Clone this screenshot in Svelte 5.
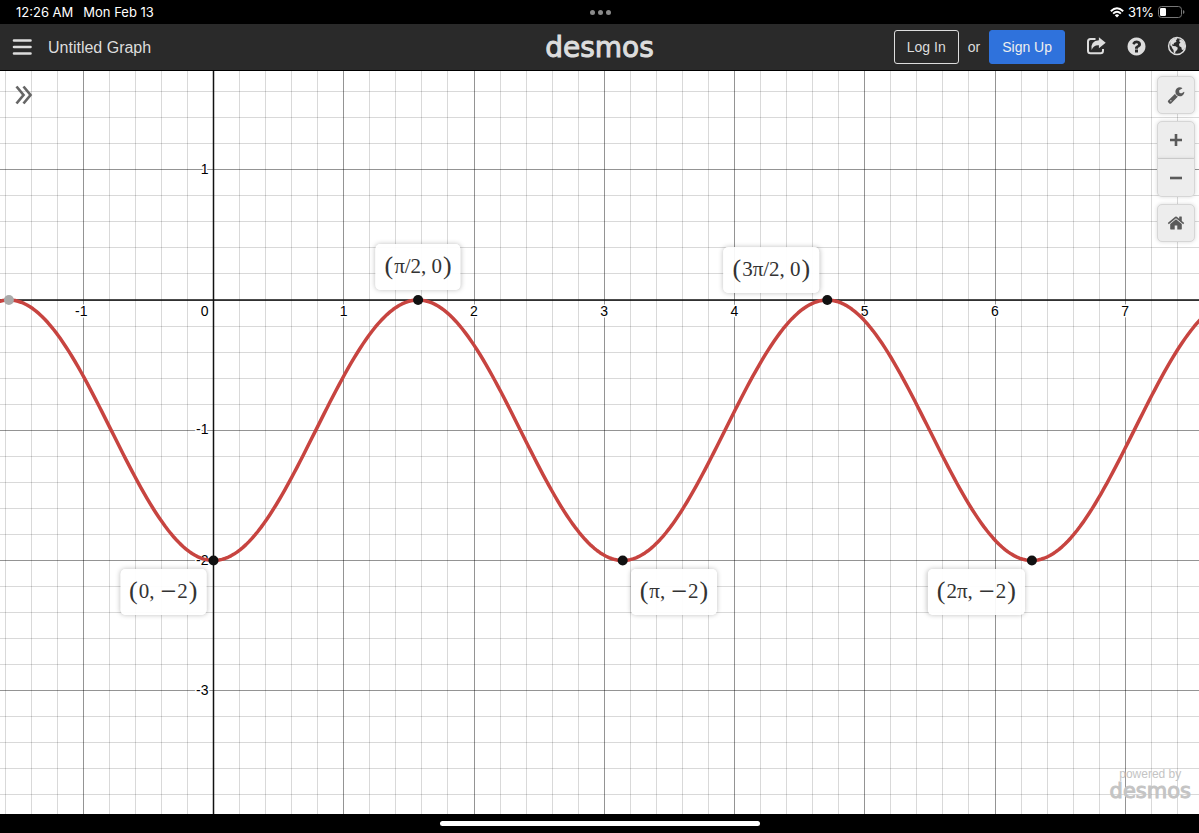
<script>
  const unit = 130.25;
  const origin = { x: 213.5, y: 229 };

  let width = $state(1199);
  let height = $state(743);

  const px = (x) => origin.x + x * unit;
  const py = (y) => origin.y - y * unit;

  const range = (from, to) => Array.from({ length: Math.max(0, to - from + 1) }, (_, i) => from + i);

  const columns = $derived(range(Math.ceil((-origin.x / unit) * 5), Math.floor(((width - origin.x) / unit) * 5)));
  const rows = $derived(range(Math.ceil(((origin.y - height) / unit) * 5), Math.floor((origin.y / unit) * 5)));
  const xLabels = $derived(columns.filter((n) => n % 5 === 0 && n !== 0).map((n) => n / 5));
  const yLabels = $derived(rows.filter((n) => n % 5 === 0 && n !== 0).map((n) => n / 5));

  const curve = $derived(
    'M' +
      range(-2, Math.ceil(width / 3) + 1)
        .map((i) => {
          const sx = i * 3;
          const x = (sx - origin.x) / unit;
          return `${sx} ${py(-Math.cos(2 * x) - 1).toFixed(2)}`;
        })
        .join('L')
  );

  const points = [
    { x: 0, y: -2, first: '0', second: '2', place: 'below-left' },
    { x: Math.PI / 2, y: 0, first: 'π/2', second: '0', place: 'above' },
    { x: Math.PI, y: -2, first: 'π', second: '2', place: 'below-right' },
    { x: (3 * Math.PI) / 2, y: 0, first: '3π/2', second: '0', place: 'above-left' },
    { x: 2 * Math.PI, y: -2, first: '2π', second: '2', place: 'below-left' }
  ];
</script>

<div class="app">
  <div class="status">
    <div class="clock"><span>12:26 AM</span><span>Mon Feb 13</span></div>
    <div class="dots"><i></i><i></i><i></i></div>
    <div class="power">
      <svg width="14" height="11" viewBox="0 0 14 11" aria-hidden="true">
        <g fill="none" stroke="#fff" stroke-width="1.9">
          <path d="M.8 4.3Q7-1.6 13.200 4.300" />
          <path d="M3.100 6.600Q7 3 10.900 6.600" />
        </g>
        <path d="M4.800 8.300Q7 6.400 9.200 8.300L7 10.600Z" fill="#fff" />
      </svg>
      <span>31%</span>
      <svg width="27" height="12" viewBox="0 0 27 12" aria-hidden="true">
        <rect x=".5" y=".5" width="23" height="11" rx="3" fill="none" stroke="#777" />
        <rect x="2" y="2" width="6" height="8" rx="1.300" fill="#fff" />
        <path d="M25 4v4q1.500-.6 1.500-2T25 4" fill="#777" />
      </svg>
    </div>
  </div>

  <header>
    <div class="left">
      <button class="icon" aria-label="Menu">
        <svg width="20" height="16" viewBox="0 0 20 16"><path d="M2 1.500h16.500M2 8h16.500M2 14.500h16.500" stroke="#ddd" stroke-width="2.600" stroke-linecap="round" /></svg>
      </button>
      <span class="title">Untitled Graph</span>
    </div>
    <a class="logo" href="#home">desmos</a>
    <div class="right">
      <button class="btn outline">Log In</button>
      <span class="or">or</span>
      <button class="btn primary">Sign Up</button>
      <div class="icons">
        <button class="icon" aria-label="Share">
          <svg width="20" height="20" viewBox="0 0 20 20">
            <path d="M9.500 3H4.500Q2 3 2 5.500v9.300q0 2.500 2.500 2.500h10q2.500 0 2.500-2.500V13" fill="none" stroke="#ddd" stroke-width="2" />
            <path d="M12.900 1.200L19.700 6.700 12.900 12.200V9.300Q7.500 8.900 5.600 14 4.200 4.800 12.900 4.300Z" fill="#ddd" />
          </svg>
        </button>
        <button class="icon" aria-label="Help">
          <svg width="21" height="21" viewBox="0 0 1792 1792"><path fill="#ddd" d="M1024 1376v-192q0-14-9-23t-23-9h-192q-14 0-23 9t-9 23v192q0 14 9 23t23 9h192q14 0 23-9t9-23zm256-672q0-88-55.500-163t-138.500-116-170-41q-243 0-371 213-15 24 8 42l132 100q7 6 19 6 16 0 25-12 53-68 86-92 34-24 86-24 48 0 85.500 26t37.500 59q0 38-20 61t-68 45q-63 28-115.500 86.500t-52.500 125.500v36q0 14 9 23t23 9h192q14 0 23-9t9-23q0-19 21.500-49.500t54.500-49.500q32-18 49-28.500t46-35 44.500-48 28-60.500 12.500-81zm384 192q0 209-103 385.500t-279.500 279.500-385.500 103-385.500-103-279.500-279.500-103-385.500 103-385.500 279.500-279.500 385.500-103 385.500 103 279.500 279.500 103 385.500z" /></svg>
        </button>
        <button class="icon" aria-label="Language">
          <svg width="20" height="20" viewBox="0 0 20 20">
            <circle cx="10" cy="10" r="8.400" fill="none" stroke="#ddd" stroke-width="1.500" />
            <path fill="#ddd" d="M3.200 5.500Q5.500 2.300 9.600 1.800L10.300 3 8.800 4.200 9.600 5.200 8.300 6.500 6.800 7.100 6.900 8.600 5.400 8.200 4.900 9.300 6.300 10.100 8.600 10.300 10.800 11.800 10.200 13.900 8.700 15.300 7.900 17.500 6.800 16.900 6.500 14 5 12 4.700 10.700 3.200 9.200Z" />
            <path fill="#ddd" d="M12.600 3.200L15.800 4.500 17.800 7.800 18.100 11.500 16.400 14 14.900 13.800 14.300 11.300 12.400 10.300 12 8 13.500 6.600 12.300 5.400Z" />
          </svg>
        </button>
      </div>
    </div>
  </header>

  <main bind:clientWidth={width} bind:clientHeight={height}>
    <svg class="graph" aria-label="Graph">
      {#each columns as n}
        <line x1={Math.floor(px(n / 5)) + 0.5} x2={Math.floor(px(n / 5)) + 0.5} y1="0" y2={height} class={n % 5 ? 'minor' : 'major'} />
      {/each}
      {#each rows as n}
        <line y1={Math.floor(py(n / 5)) + 0.5} y2={Math.floor(py(n / 5)) + 0.5} x1="0" x2={width} class={n % 5 ? 'minor' : 'major'} />
      {/each}
      <line class="axis" x1={px(0)} x2={px(0)} y1="0" y2={height} />
      <line class="axis" x1="0" x2={width} y1={py(0)} y2={py(0)} />
      <g class="numbers">
        {#each xLabels as n}
          <text x={px(n) - (n < 0 ? 2 : 0)} y={py(0) + 16} text-anchor="middle">{n}</text>
        {/each}
        {#each yLabels as n}
          <text x={px(0) - 5} y={py(n) + 4} text-anchor="end">{n}</text>
        {/each}
        <text x={px(0) - 5} y={py(0) + 16} text-anchor="end">0</text>
      </g>
      <path class="curve" d={curve} />
      <circle cx={px(-Math.PI / 2)} cy={py(0)} r="5" fill="#aaa" />
      {#each points as p}
        <circle cx={px(p.x)} cy={py(p.y)} r="5" fill="#111" />
      {/each}
    </svg>

    {#each points as p}
      <div class="label {p.place}" style="left:{px(p.x)}px;top:{py(p.y)}px">
        <span class="paren">(</span>
        <span>{p.first}, {#if p.y < 0}<span class="minus">−</span>{/if}{p.second}</span>
        <span class="paren">)</span>
      </div>
    {/each}

    <button class="expand" aria-label="Show expression list">
      <svg width="18" height="20" viewBox="0 0 18 20"><path d="M1.500 1.500L8.500 10 1.500 18.500M8.500 1.500L15.500 10 8.500 18.500" fill="none" stroke="#666" stroke-width="2.700" /></svg>
    </button>

    <div class="tools">
      <button class="tool" aria-label="Graph settings">
        <svg width="18" height="18" viewBox="0 0 1792 1792"><path d="M448 1472q0-26-19-45t-45-19-45 19-19 45 19 45 45 19 45-19 19-45zm644-420l-682 682q-37 37-90 37-52 0-91-37l-106-108q-38-36-38-90 0-53 38-91l681-681q39 98 114.500 173.500t173.500 114.500zm634-435q0 39-23 106-47 134-164.500 217.500t-258.500 83.500q-185 0-316.500-131.500t-131.500-316.500 131.500-316.500 316.500-131.500q58 0 121.500 16.500t107.500 46.500q16 11 16 28t-16 28l-293 169v224l193 107q5-3 79-48.500t135.500-81 70.500-35.500q15 0 23.500 10t8.500 25z" /></svg>
      </button>
      <div class="zoom">
        <button class="tool" aria-label="Zoom in"><svg width="12" height="12" viewBox="0 0 12 12"><path d="M4.700 0h2.600v4.700H12v2.600H7.300V12H4.700V7.300H0V4.700h4.700z" /></svg></button>
        <button class="tool" aria-label="Zoom out"><svg width="12" height="12" viewBox="0 0 12 12"><path d="M0 4.700h12v2.600H0z" /></svg></button>
      </div>
      <button class="tool" aria-label="Default view">
        <svg width="18" height="18" viewBox="0 0 1792 1792"><path d="M1472 992v480q0 26-19 45t-45 19h-384v-384h-256v384h-384q-26 0-45-19t-19-45v-480q0-1 .5-3t.5-3l575-474 575 474q1 2 1 6zm223-69l-62 74q-8 9-21 11h-3q-13 0-21-7l-692-577-692 577q-12 8-24 7-13-2-21-11l-62-74q-8-10-7-23.500t11-21.500l719-599q32-26 76-26t76 26l244 204v-195q0-14 9-23t23-9h192q14 0 23 9t9 23v408l219 182q10 8 11 21.500t-7 23.500z" /></svg>
      </button>
    </div>

    <div class="powered"><span>powered by</span><strong>desmos</strong></div>
  </main>

  <footer><div class="pill"></div></footer>
</div>

<style>
  :global(body) { margin: 0; background: #000; }
  .app {
    display: flex;
    flex-direction: column;
    height: 100vh;
    font-family: "Liberation Sans", Arial, sans-serif;
    overflow: hidden;
  }
  button { font: inherit; margin: 0; padding: 0; border: 0; background: none; cursor: pointer; }
  svg { display: block; }

  .status {
    display: grid;
    grid-template-columns: 1fr auto 1fr;
    align-items: center;
    height: 24px;
    padding: 0 14px 0 16px;
    background: #000;
    color: #fff;
    font-family: Inter, sans-serif;
    font-size: 13px;
  }
  .clock { display: flex; gap: 10px; }
  .dots { display: flex; gap: 3px; }
  .dots i { width: 5px; height: 5px; border-radius: 50%; background: #8a8a8a; }
  .power { display: flex; justify-content: flex-end; align-items: center; gap: 4px; }

  header {
    display: grid;
    grid-template-columns: 1fr auto 1fr;
    align-items: center;
    height: 46px;
    padding: 0 12px;
    background: #2a2a2a;
    border-bottom: 1px solid #000;
    color: #ddd;
    font-size: 14px;
  }
  .left { display: flex; align-items: center; gap: 16px; }
  .title { font-size: 16px; line-height: 20px; padding-top: 2px; }
  .logo {
    padding-top: 2px;
    font-family: "DejaVu Sans", sans-serif;
    font-size: 28px;
    line-height: 40px;
    color: #ddd;
    text-decoration: none;
    -webkit-text-stroke: 1px #ddd;
  }
  .right { display: flex; align-items: center; justify-content: flex-end; }
  .btn { height: 34px; padding: 0 12px; border-radius: 3px; border: 1px solid #ddd; color: #ddd; }
  .btn.primary { background: #2f72dc; border-color: #2f72dc; color: #eee; }
  .or { padding: 0 9px; }
  .icons { display: flex; align-items: center; gap: 20px; margin: 0 0 2px 21px; }

  main { position: relative; flex: 1; min-height: 0; background: #fff; overflow: hidden; }
  .graph { position: absolute; inset: 0; width: 100%; height: 100%; }
  .minor { stroke: #000; stroke-opacity: 0.15; }
  .major { stroke: #000; stroke-opacity: 0.42; }
  .axis { stroke: #111; stroke-width: 1.5px; }
  .numbers { font-size: 14px; fill: #000; stroke: #fff; stroke-width: 3px; stroke-linejoin: round; paint-order: stroke; }
  .curve { fill: none; stroke: #c74440; stroke-width: 3.5px; stroke-linejoin: round; }

  .label {
    position: absolute;
    display: flex;
    align-items: center;
    gap: 1px;
    box-sizing: border-box;
    height: 46px;
    padding: 0 9px 2px;
    border-radius: 5px;
    background: rgba(255, 255, 255, 0.93);
    box-shadow: 0 0 5px rgba(0, 0, 0, 0.25);
    color: #333;
    font-family: "Liberation Serif", serif;
    font-size: 21px;
    line-height: 26px;
    white-space: nowrap;
  }
  .paren { font-size: 26px; }
  .minus { font-family: "DejaVu Serif", serif; line-height: 20px; }
  .below-left { transform: translate(calc(-100% - 7px), 8px); }
  .below-right { transform: translate(8px, 8px); }
  .above { transform: translate(-50%, calc(-100% - 10px)); }
  .above-left { transform: translate(calc(-100% - 8px), calc(-100% - 7px)); }

  .expand { position: absolute; left: 15px; top: 14px; }
  .tools { position: absolute; right: 4px; top: 5px; display: flex; flex-direction: column; gap: 7px; }
  .tool {
    display: flex;
    align-items: center;
    justify-content: center;
    box-sizing: border-box;
    width: 38px;
    height: 38px;
    border: 1px solid #d6d6d6;
    border-radius: 5px;
    background: #ededed;
    box-shadow: 0 0 4px rgba(0, 0, 0, 0.15);
    fill: #5a5a5a;
  }
  .zoom .tool:first-child { border-radius: 5px 5px 0 0; }
  .zoom .tool:last-child { border-top: 0; border-radius: 0 0 5px 5px; }
  .powered {
    position: absolute;
    right: 8px;
    bottom: 13px;
    display: flex;
    flex-direction: column;
    align-items: center;
    color: #c4c4c4;
    font-size: 12px;
    line-height: 14px;
  }
  .powered strong { font: 21px/20px "DejaVu Sans", sans-serif; -webkit-text-stroke: 1px #c4c4c4; }

  footer { display: flex; justify-content: center; align-items: center; height: 19px; background: #000; }
  .pill { width: 27%; max-width: 320px; height: 5px; border-radius: 3px; background: #fff; }
</style>
